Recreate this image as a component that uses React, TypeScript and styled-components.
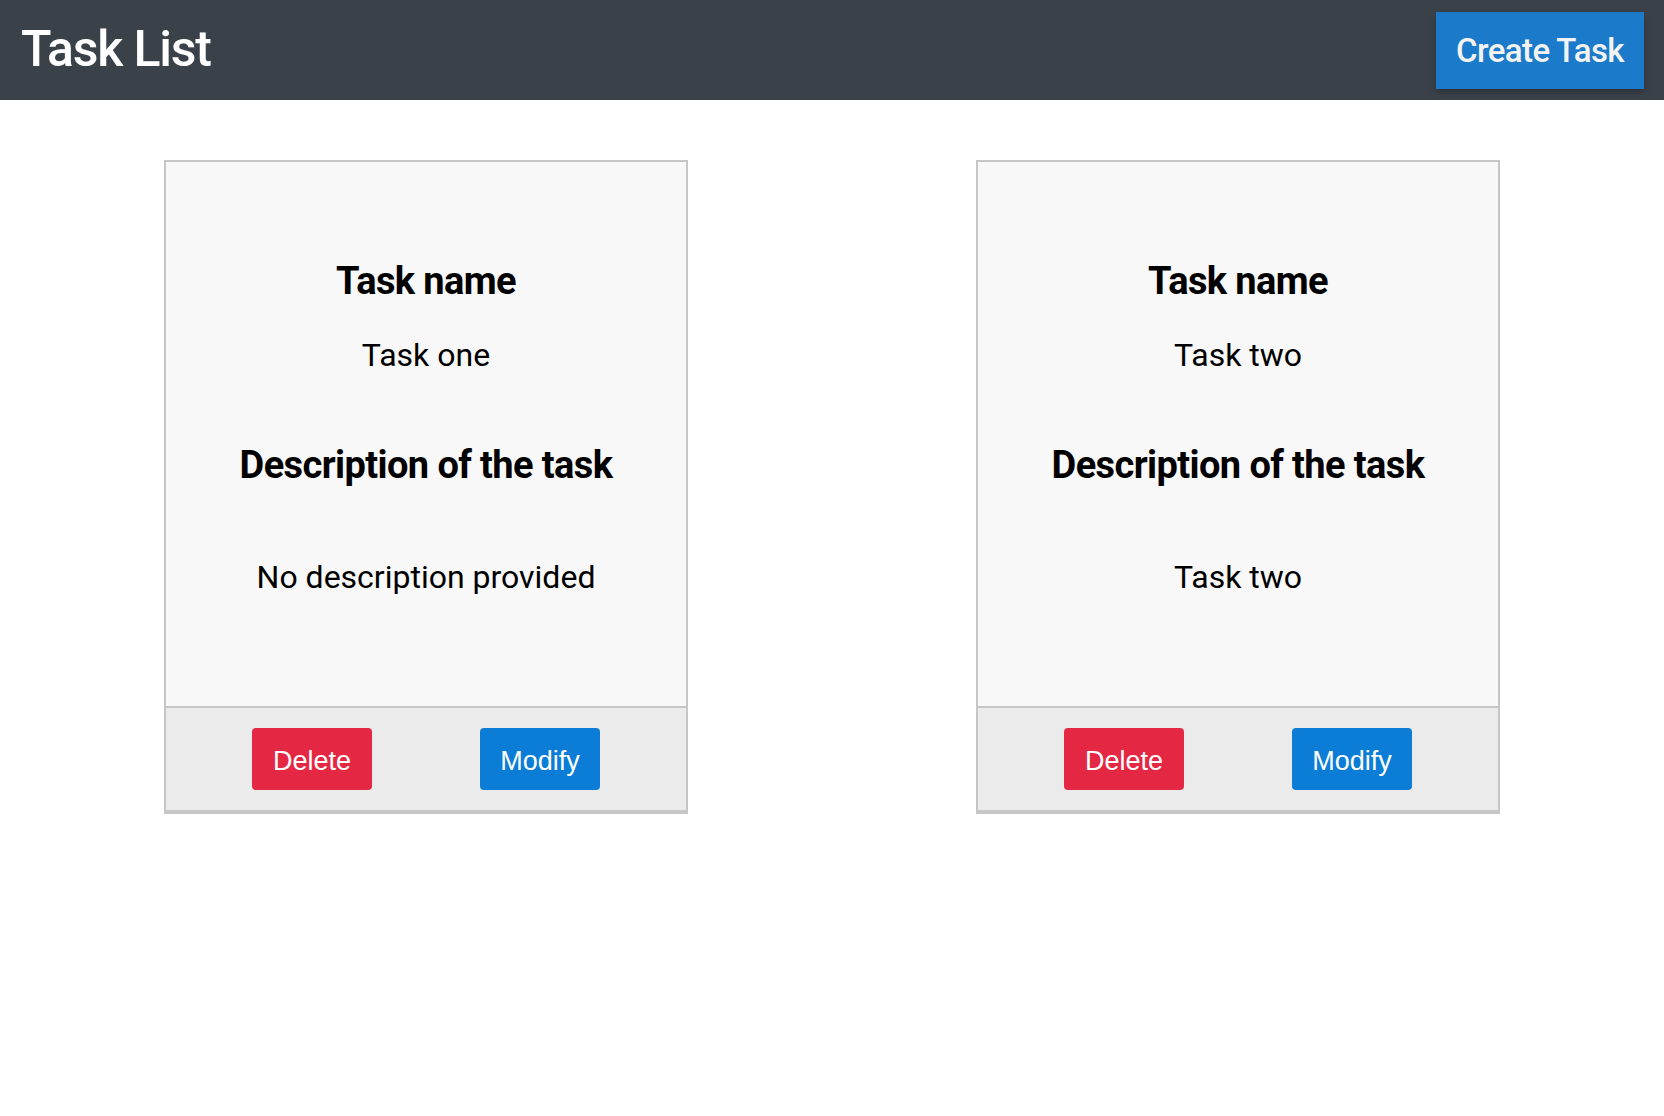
import React from 'react';
import styled, { createGlobalStyle } from 'styled-components';

const GlobalStyle = createGlobalStyle`
  body {
    margin: 0;
    background: #ffffff;
    font-family: Roboto, "Liberation Sans", Arial, sans-serif;
  }
`;

const Header = styled.header`
  height: 100px;
  background-color: #3a4148;
  display: flex;
  align-items: center;
  justify-content: space-between;
  padding: 0 20px 0 21px;
  box-sizing: border-box;
`;

const Title = styled.h1`
  margin: 0 0 2px;
  color: #ffffff;
  font-size: 50px;
  font-weight: 500;
  letter-spacing: -1.2px;
`;

const CreateButton = styled.button`
  width: 208px;
  height: 77px;
  margin-top: 1px;
  border: none;
  background-color: #1b7bca;
  color: #f3f3f3;
  font-family: Roboto, sans-serif;
  font-size: 33px;
  font-weight: 500;
  letter-spacing: -0.6px;
  box-shadow: 0 3px 6px rgba(0, 0, 0, 0.25);
  cursor: pointer;
`;

const Board = styled.main`
  display: flex;
  justify-content: space-between;
  padding: 60px 164px 0;
`;

const Card = styled.div`
  width: 524px;
  box-sizing: border-box;
  border: 2px solid #c6c6c6;
  border-bottom-width: 4px;
  background-color: #f8f8f8;
  display: flex;
  flex-direction: column;
`;

const Body = styled.div`
  height: 544px;
  padding-top: 97px;
  box-sizing: border-box;
  text-align: center;
  color: #000000;
`;

const Heading = styled.h2<{ gap?: number }>`
  margin: ${p => p.gap || 0}px 0 0;
  font-size: 38px;
  line-height: 45.6px;
  font-weight: 700;
  letter-spacing: -0.6px;
`;

const Text = styled.p<{ gap: number }>`
  margin: ${p => p.gap}px 0 0;
  font-size: 32px;
  line-height: 38.4px;
`;

const Footer = styled.div`
  border-top: 2px solid #c6c6c6;
  background-color: #ebebeb;
  height: 104px;
  box-sizing: border-box;
  display: flex;
  align-items: center;
  justify-content: center;
  gap: 108px;
`;

const ActionButton = styled.button<{ color: string }>`
  width: 120px;
  height: 62px;
  padding: 4px 0 0;
  border: none;
  border-radius: 4px;
  background-color: ${p => p.color};
  color: #ffffff;
  font-family: "Liberation Sans", Arial, sans-serif;
  font-size: 27px;
  cursor: pointer;
`;

interface Task {
  name: string;
  description?: string;
}

const tasks: Task[] = [
  { name: 'Task one' },
  { name: 'Task two', description: 'Task two' },
];

const TaskCard = ({ task }: { task: Task }) => (
  <Card>
    <Body>
      <Heading>Task name</Heading>
      <Text gap={31}>{task.name}</Text>
      <Heading gap={69}>Description of the task</Heading>
      <Text gap={69}>{task.description || 'No description provided'}</Text>
    </Body>
    <Footer>
      <ActionButton color="#e42843">Delete</ActionButton>
      <ActionButton color="#0c7dd6">Modify</ActionButton>
    </Footer>
  </Card>
);

const App = () => (
  <>
    <GlobalStyle />
    <Header>
      <Title>Task List</Title>
      <CreateButton>Create Task</CreateButton>
    </Header>
    <Board>
      {tasks.map(task => (
        <TaskCard key={task.name} task={task} />
      ))}
    </Board>
  </>
);

export default App;
